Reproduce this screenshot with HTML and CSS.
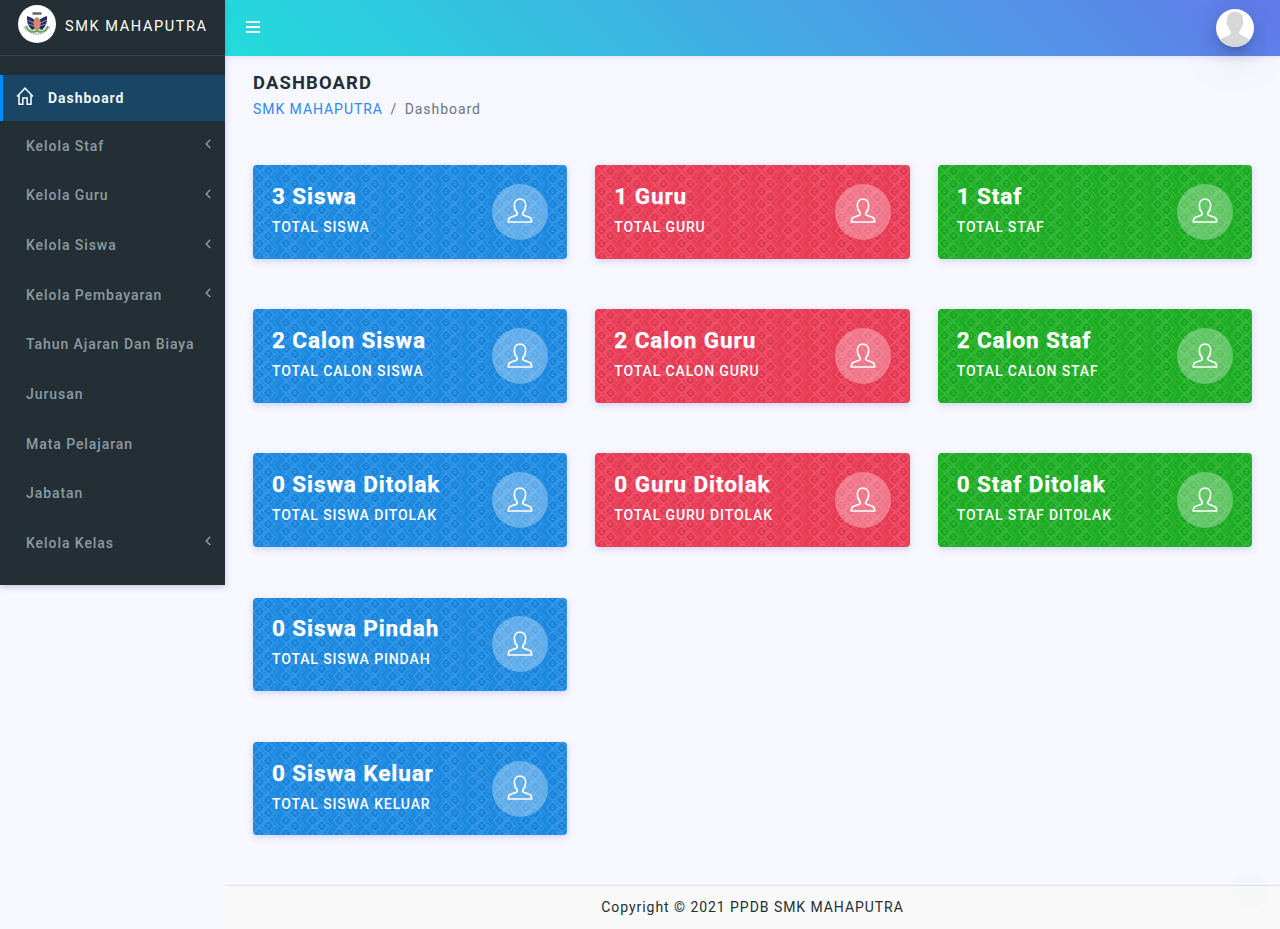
FILE: index.html
```
<!DOCTYPE html>
<html lang="id">
<head>
<meta charset="utf-8">
<title>Dashboard</title>
<link rel="stylesheet" href="styles.css">
</head>
<body>
<svg width="0" height="0" class="defs" aria-hidden="true">
  <symbol id="user" viewBox="0 0 26 26"><path d="M13 1.200C9.600 1.200 7.300 3.600 7.300 7.200C7.300 10 8.100 12.500 9.900 14.400C10.700 15.600 10.300 17 9 17.400L3.600 19.200C1.800 19.900 1.300 21 1.300 24H24.700C24.700 21 24.200 19.900 22.400 19.200L17 17.400C15.700 17 15.300 15.600 16.100 14.400C17.900 12.500 18.700 10 18.700 7.200C18.700 3.600 16.400 1.200 13 1.200Z" fill="none" stroke="currentColor" stroke-width="1.700" stroke-linejoin="round"/></symbol>
  <symbol id="chev" viewBox="0 0 6 10"><path d="M5.200 .8L1.200 4.900L5.200 9" fill="none" stroke="currentColor" stroke-width="1.500"/></symbol>
  <pattern id="weave" width="26.667" height="13" patternUnits="userSpaceOnUse">
    <g fill="none">
      <path class="light" stroke-width="2" stroke-dasharray="1 1" d="M15.400 0L21.400 6L15.400 12L9.400 6ZM6.400 -5.500L12.400 .5L6.400 6.500L.4 .5ZM6.400 7.500L12.400 13.500L6.400 19.500L.4 13.500ZM15.400 4V8M6.400 -1V2M6.400 11.500V15M21 -.5L26 6L21 12.500"/>
      <path class="dark" stroke-width="1.400" d="M15.400 2.500L18.900 6L15.400 9.500L11.900 6ZM6.400 -3L9.900 .5L6.400 4L2.900 .5ZM6.400 10L9.900 13.500L6.400 17L2.900 13.500ZM22 -.5L26 5V7L22 12.500"/>
    </g>
  </pattern>
</svg>
<div class="app">
  <aside class="sidebar">
    <div class="brand">
      <svg class="logo" viewBox="0 0 38 38"><circle cx="19" cy="19" r="19" fill="#fff"/><path d="M14.500 8.500H23.500" stroke="#666" stroke-width="2.500"/><path d="M9 11Q13 12 17 15L19 12L21 15Q25 12 29 11Q30 20 24 25L19 23L14 25Q8 20 9 11Z" fill="#272c60"/><path d="M9 15L16 18M29 15L22 18M10 19L16 21M28 19L22 21" stroke="#8390b5"/><path d="M17 13H21L23 18L21 25H17L15 18Z" fill="#d98961"/><path d="M8 21Q11 29 19 26Q27 29 30 21" fill="none" stroke="#5aaa55" stroke-width="2"/><path d="M6 22Q19 36 32 22" fill="none" stroke="#91a08f" stroke-width="1.500" stroke-dasharray="1 .8"/></svg>
      <span>SMK MAHAPUTRA</span>
    </div>
    <nav>
      <a class="active"><svg class="home" viewBox="0 0 18 19"><path d="M1 9.500L9 1.200L17 9.500M3 8V17.300H6.800V11H11.200V17.300H15V8" fill="none" stroke="currentColor" stroke-width="1.600"/></svg>Dashboard</a>
      <a>Kelola Staf<svg class="chev"><use href="#chev"/></svg></a>
      <a>Kelola Guru<svg class="chev"><use href="#chev"/></svg></a>
      <a>Kelola Siswa<svg class="chev"><use href="#chev"/></svg></a>
      <a>Kelola Pembayaran<svg class="chev"><use href="#chev"/></svg></a>
      <a>Tahun Ajaran Dan Biaya</a>
      <a>Jurusan</a>
      <a>Mata Pelajaran</a>
      <a>Jabatan</a>
      <a>Kelola Kelas<svg class="chev"><use href="#chev"/></svg></a>
    </nav>
  </aside>
  <div class="main">
    <header>
      <svg class="menu" viewBox="0 0 14 12"><path d="M.8 1H13.200M.8 6H13.200M.8 11H13.200" stroke="#fff" stroke-width="2" stroke-linecap="round"/></svg>
      <div class="avatar"><svg viewBox="0 0 38 38"><path d="M11 12C11 5 14 3 19 3S27 5 27 12C28 13 27 16 26 17C25 21 23 22 23 24C24 27 31 28 34 31V38H4V31C7 28 14 27 15 24C15 22 13 21 12 17C10 16 10 13 11 12Z" fill="#d7d7d7"/></svg></div>
    </header>
    <section class="content">
      <h1>DASHBOARD</h1>
      <div class="crumbs"><a>SMK MAHAPUTRA</a><i>/</i><span>Dashboard</span></div>
      <div class="grid">
        <div class="card blue"><svg class="texture"><rect width="100%" height="100%" fill="url(#weave)"/></svg><div class="copy"><h2>3 Siswa</h2><p>TOTAL SISWA</p></div><div class="badge"><svg><use href="#user"/></svg></div></div>
        <div class="card red"><svg class="texture"><rect width="100%" height="100%" fill="url(#weave)"/></svg><div class="copy"><h2>1 Guru</h2><p>TOTAL GURU</p></div><div class="badge"><svg><use href="#user"/></svg></div></div>
        <div class="card green"><svg class="texture"><rect width="100%" height="100%" fill="url(#weave)"/></svg><div class="copy"><h2>1 Staf</h2><p>TOTAL STAF</p></div><div class="badge"><svg><use href="#user"/></svg></div></div>
        <div class="card blue"><svg class="texture"><rect width="100%" height="100%" fill="url(#weave)"/></svg><div class="copy"><h2>2 Calon Siswa</h2><p>TOTAL CALON SISWA</p></div><div class="badge"><svg><use href="#user"/></svg></div></div>
        <div class="card red"><svg class="texture"><rect width="100%" height="100%" fill="url(#weave)"/></svg><div class="copy"><h2>2 Calon Guru</h2><p>TOTAL CALON GURU</p></div><div class="badge"><svg><use href="#user"/></svg></div></div>
        <div class="card green"><svg class="texture"><rect width="100%" height="100%" fill="url(#weave)"/></svg><div class="copy"><h2>2 Calon Staf</h2><p>TOTAL CALON STAF</p></div><div class="badge"><svg><use href="#user"/></svg></div></div>
        <div class="card blue"><svg class="texture"><rect width="100%" height="100%" fill="url(#weave)"/></svg><div class="copy"><h2>0 Siswa Ditolak</h2><p>TOTAL SISWA DITOLAK</p></div><div class="badge"><svg><use href="#user"/></svg></div></div>
        <div class="card red"><svg class="texture"><rect width="100%" height="100%" fill="url(#weave)"/></svg><div class="copy"><h2>0 Guru Ditolak</h2><p>TOTAL GURU DITOLAK</p></div><div class="badge"><svg><use href="#user"/></svg></div></div>
        <div class="card green"><svg class="texture"><rect width="100%" height="100%" fill="url(#weave)"/></svg><div class="copy"><h2>0 Staf Ditolak</h2><p>TOTAL STAF DITOLAK</p></div><div class="badge"><svg><use href="#user"/></svg></div></div>
        <div class="card blue first"><svg class="texture"><rect width="100%" height="100%" fill="url(#weave)"/></svg><div class="copy"><h2>0 Siswa Pindah</h2><p>TOTAL SISWA PINDAH</p></div><div class="badge"><svg><use href="#user"/></svg></div></div>
        <div class="card blue first"><svg class="texture"><rect width="100%" height="100%" fill="url(#weave)"/></svg><div class="copy"><h2>0 Siswa Keluar</h2><p>TOTAL SISWA KELUAR</p></div><div class="badge"><svg><use href="#user"/></svg></div></div>
      </div>
    </section>
    <footer>Copyright © 2021 PPDB SMK MAHAPUTRA</footer>
  </div>
</div>
<div class="totop"></div>
</body>
</html>
```
FILE: styles.css
```
* { box-sizing: border-box; }
body { margin: 0; background: #f7f7ff; font-family: Roboto, sans-serif; font-size: 14px; letter-spacing: .95px; color: #232f35; overflow: hidden; }
.defs { position: absolute; }
.app { display: flex; align-items: flex-start; height: 929px; }
.sidebar { width: 225px; height: 585px; flex: none; background: #232f35; box-shadow: 0 2px 6px rgba(90, 90, 180, .3); position: relative; z-index: 2; }
.brand { height: 56px; border-bottom: 1px solid #37454c; display: flex; align-items: flex-start; padding: 5px 0 0 18px; color: #fff; font-size: 14.500px; letter-spacing: 1.600px; }
.brand span { padding: 13px 0 0 9px; line-height: 18px; white-space: nowrap; }
.logo { width: 38px; height: 38px; flex: none; }
nav { padding-top: 19px; }
nav a { display: flex; align-items: center; height: 49.650px; padding: 0 14px 0 26px; color: #8c9aa2; font-weight: 500; letter-spacing: .93px; white-space: nowrap; }
nav a.active { height: 46px; background: #1a4666; border-left: 3px solid #008cff; color: #f0f5f8; font-weight: 700; padding-left: 13px; letter-spacing: .96px; }
.home { width: 18px; height: 19px; margin: -4px 14px 0 0; }
.chev { width: 6px; height: 10px; margin: -3px 0 0 auto; }
.main { flex: 1; min-width: 0; height: 929px; display: flex; flex-direction: column; }
header { height: 56px; flex: none; display: flex; align-items: center; justify-content: space-between; padding: 0 26px 0 21px; background: linear-gradient(45deg, #22dcdc, #637aeb); box-shadow: 0 2px 6px rgba(100, 100, 220, .12); }
.menu { width: 14px; height: 12px; margin-top: -2px; }
.avatar { width: 38px; height: 38px; border-radius: 50%; background: #fff; box-shadow: 0 16px 38px -12px rgba(0,0,0,.56), 0 4px 25px rgba(0,0,0,.12), 0 8px 10px -5px rgba(0,0,0,.2); }
.avatar svg { display: block; border-radius: 50%; }
.content { flex: 1; padding: 16px 28px 0; }
h1 { margin: 0; font-size: 18.400px; line-height: 22px; font-weight: 700; letter-spacing: 1.150px; }
.crumbs { display: flex; line-height: 20px; margin-top: 5px; color: #6c757d; }
.crumbs a { color: #2c8af0; }
.crumbs i { font-style: normal; margin: 0 7.500px; }
.grid { display: grid; grid-template-columns: repeat(3, 1fr); column-gap: 28px; row-gap: 50.500px; margin-top: 46px; grid-auto-rows: 93.700px; }
.card { position: relative; display: flex; justify-content: space-between; align-items: center; padding: 0 19px; border-radius: 4px; overflow: hidden; color: #fff; }
.card { box-shadow: 0 2px 6px rgba(100, 100, 200, .25); }
.first { grid-column: 1; }
.blue { background: #1a8ae4; }
.red { background: #ec3b56; }
.green { background: #1baf22; }
.texture { position: absolute; inset: 0; width: 100%; height: 100%; }
.dark { stroke: #000; stroke-opacity: .08; }
.light { stroke: #fff; stroke-opacity: .17; }
.copy, .badge { position: relative; }
.copy { padding-bottom: 6px; }
h2 { margin: 0; font-size: 22.500px; line-height: 28px; font-weight: 700; letter-spacing: .91px; -webkit-text-stroke: .25px #fff; }
p { margin: 8px 0 0; line-height: 18px; font-weight: 500; letter-spacing: .88px; }
.badge { width: 56px; height: 56px; border-radius: 50%; background: rgba(255,255,255,.3); display: flex; align-items: center; justify-content: center; }
.badge svg { width: 26px; height: 26px; margin-top: -1px; }
footer { height: 44px; flex: none; border-top: 1px solid #dfdff5; background: #f9f9f9; text-align: center; line-height: 43px; }
.totop { position: fixed; right: 12px; bottom: 20px; width: 36px; height: 36px; border-radius: 50%; background: rgba(0,140,255,.015); z-index: 5; }
```
